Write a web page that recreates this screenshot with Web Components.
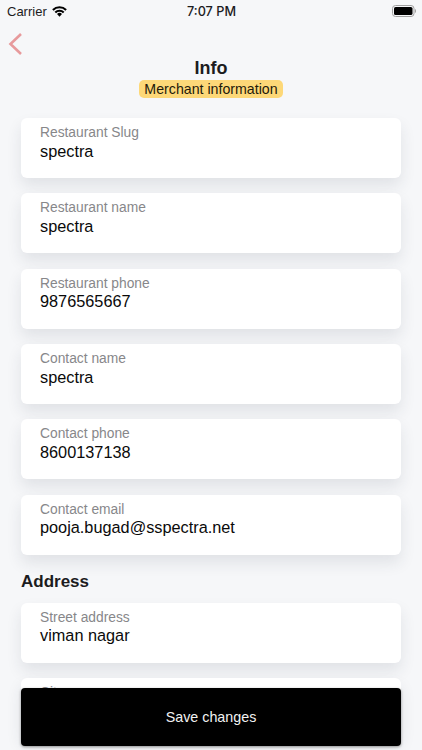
<!DOCTYPE html>
<html>
<head>
<meta charset="utf-8">
<style>
  html, body { margin: 0; height: 100%; }
  body { background: #f6f7f9; font-family: "Liberation Sans", Arial, sans-serif; }
</style>
</head>
<body>
<merchant-screen>
  <info-field label="Restaurant Slug" value="spectra"></info-field>
  <info-field label="Restaurant name" value="spectra"></info-field>
  <info-field label="Restaurant phone" value="9876565667"></info-field>
  <info-field label="Contact name" value="spectra"></info-field>
  <info-field label="Contact phone" value="8600137138"></info-field>
  <info-field label="Contact email" value="pooja.bugad@sspectra.net"></info-field>
  <section-title>Address</section-title>
  <info-field label="Street address" value="viman nagar"></info-field>
  <info-field label="City" value=""></info-field>
</merchant-screen>

<script>
class StatusBar extends HTMLElement {
  constructor() {
    super();
    this.attachShadow({mode: "open"});
  }

  connectedCallback() {
    this.shadowRoot.innerHTML = `
      <style>
        :host {
          display: grid;
          grid-template-columns: 1fr auto 1fr;
          align-items: center;
          height: 22px;
          padding: 0 6px 0 7px;
          font: 13px "Liberation Sans", Arial, sans-serif;
          color: #1c1c1e;
        }
        .left { display: flex; align-items: center; gap: 5px; }
        .time { font-weight: 500; font-family: Inter, sans-serif; font-size: 12.7px; }
        .right { display: flex; justify-content: flex-end; }
      </style>
      <div class="left">
        <span>Carrier</span>
        <svg width="15" height="11" viewBox="0 0 15 11">
          <path d="M7.5 10.8 5 8a3.500 3.500 0 0 1 5 0z" fill="#000"/>
          <path d="M3.300 6.400a6 6 0 0 1 8.400 0" fill="none" stroke="#000" stroke-width="2.1"/>
          <path d="M.9 3.900a9.400 9.400 0 0 1 13.200 0" fill="none" stroke="#000" stroke-width="2.1"/>
        </svg>
      </div>
      <div class="time">7:07 PM</div>
      <div class="right">
        <svg width="24" height="12" viewBox="0 0 24 12">
          <rect x="0.5" y="0.5" width="21.5" height="11" rx="3" fill="none" stroke="#a0a0a0"/>
          <rect x="2" y="2" width="18.5" height="8" rx="1.6" fill="#000"/>
          <path d="M23 4v4c.6-.2 1-1 1-2s-.4-1.800-1-2z" fill="#a0a0a0"/>
        </svg>
      </div>
    `;
  }
}

class InfoField extends HTMLElement {
  constructor() {
    super();
    this.attachShadow({mode: "open"});
  }

  connectedCallback() {
    this.shadowRoot.innerHTML = `
      <style>
        :host {
          display: block;
          height: 60px;
          box-sizing: border-box;
          padding: 7px 19px 0;
          background: #fff;
          border-radius: 6px;
          box-shadow: 0 8px 15px rgba(40, 50, 70, 0.1);
          overflow: hidden;
        }
        .label { font-size: 13.8px; line-height: 15.5px; color: #87878a; }
        .value { font-size: 16.3px; line-height: 20px; color: #0a0a0a; }
      </style>
      <div class="label">${this.getAttribute("label")}</div>
      <div class="value">${this.getAttribute("value")}</div>
    `;
  }
}

class SectionTitle extends HTMLElement {
  constructor() {
    super();
    this.attachShadow({mode: "open"});
  }

  connectedCallback() {
    this.shadowRoot.innerHTML = `
      <style>
        :host {
          display: block;
          font-size: 17px;
          font-weight: 700;
          line-height: 21px;
          color: #1c1c1e;
          margin: 1px 0 -4.5px;
        }
      </style>
      <slot></slot>
    `;
  }
}

class MerchantScreen extends HTMLElement {
  constructor() {
    super();
    this.attachShadow({mode: "open"});
  }

  connectedCallback() {
    this.shadowRoot.innerHTML = `
      <style>
        :host {
          display: block;
          position: relative;
          width: 422px;
          height: 750px;
          overflow: hidden;
        }
        .back { display: block; margin: 11px 0 0 8px; height: 22px; }
        header {
          display: flex;
          flex-direction: column;
          align-items: center;
          margin-top: 2px;
        }
        h1 { margin: 0; font-size: 18px; line-height: 22px; font-weight: 700; color: #1c1c1e; }
        .badge {
          font-size: 14.2px;
          line-height: 18px;
          padding: 0 5px;
          margin-top: 1px;
          background: #fdd878;
          border-radius: 5px;
          color: #1f1a0a;
        }
        .fields {
          display: flex;
          flex-direction: column;
          gap: 15.3px;
          padding: 0 21px;
          margin-top: 20.2px;
        }
        .save {
          position: absolute;
          left: 21px;
          right: 21px;
          top: 688px;
          height: 57.5px;
          display: flex;
          align-items: center;
          justify-content: center;
          background: #000;
          border-radius: 4px;
          color: #f2f2f2;
          font-size: 14.3px;
          box-shadow: 0 1px 3px rgba(0, 0, 0, 0.4);
        }
      </style>
      <status-bar></status-bar>
      <svg class="back" width="15" height="22" viewBox="0 0 15 22">
        <path d="M13 1 2.500 11 13 21" fill="none" stroke="#e79a9c" stroke-width="2.6"/>
      </svg>
      <header>
        <h1>Info</h1>
        <div class="badge">Merchant information</div>
      </header>
      <div class="fields"><slot></slot></div>
      <div class="save">Save changes</div>
    `;
  }
}

customElements.define("status-bar", StatusBar);
customElements.define("info-field", InfoField);
customElements.define("section-title", SectionTitle);
customElements.define("merchant-screen", MerchantScreen);
</script>
</body>
</html>
